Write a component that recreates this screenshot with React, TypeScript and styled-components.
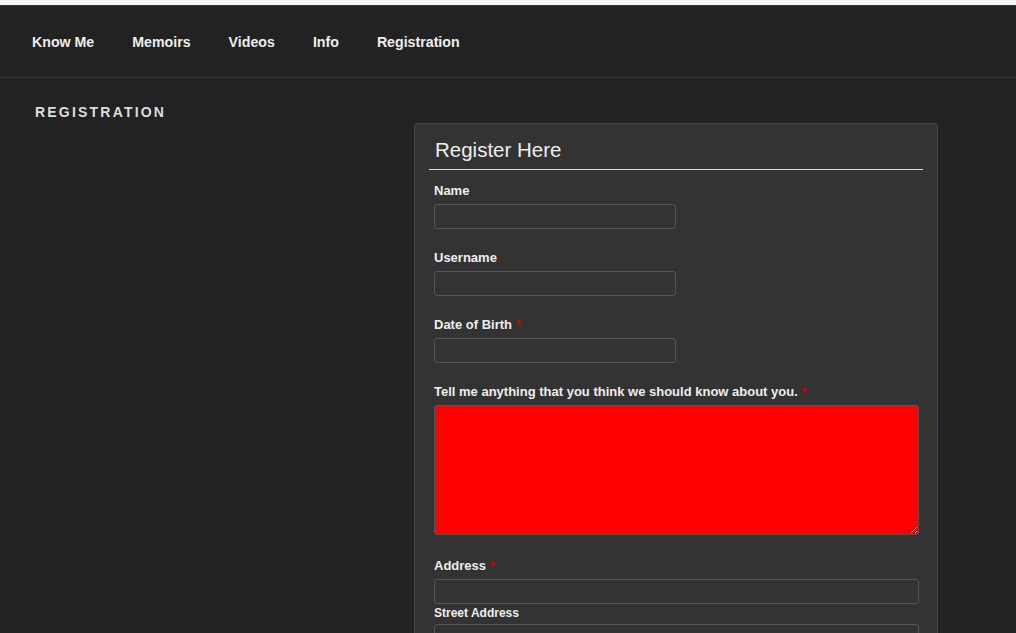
import React from 'react';
import styled, { createGlobalStyle } from 'styled-components';

const GlobalStyle = createGlobalStyle`
  html, body {
    margin: 0;
    padding: 0;
    background: #222222;
    font-family: 'Liberation Sans', Arial, sans-serif;
    overflow: hidden;
  }
`;

const NAV_ITEMS = ['Know Me', 'Memoirs', 'Videos', 'Info', 'Registration'];

type FieldProps = {
  label: string;
  required?: boolean;
  wide?: boolean;
};

const Field: React.FC<FieldProps> = ({ label, required, wide }) => (
  <FieldBox>
    <Label>
      {label}
      {required && <Required> *</Required>}
    </Label>
    <TextInput type="text" $wide={wide} />
  </FieldBox>
);

export const App: React.FC = () => (
  <>
    <GlobalStyle />
    <Page>
      <TopStrip />
      <NavBar>
        {NAV_ITEMS.map((item) => (
          <NavLink key={item}>{item}</NavLink>
        ))}
      </NavBar>
      <Main>
        <PageTitle>Registration</PageTitle>
        <Panel>
          <PanelHeading>Register Here</PanelHeading>
          <Fields>
            <Field label="Name" />
            <Field label="Username" />
            <Field label="Date of Birth" required />
            <FieldBox $gap={22}>
              <Label>
                Tell me anything that you think we should know about you.
                <Required> *</Required>
              </Label>
              <TextArea />
            </FieldBox>
            <FieldBox>
              <Label>
                Address<Required> *</Required>
              </Label>
              <TextInput type="text" $wide />
              <SubLabel>Street Address</SubLabel>
              <TextInput type="text" $wide />
            </FieldBox>
          </Fields>
        </Panel>
      </Main>
    </Page>
  </>
);

const Page = styled.div`
  min-height: 633px;
  background: #222222;
`;

const TopStrip = styled.div`
  height: 5px;
  background: #f6f6f6;
  border-bottom: 1px solid #3a3a3a;
`;

const NavBar = styled.nav`
  display: flex;
  align-items: center;
  gap: 38px;
  height: 71px;
  padding-left: 32px;
  border-bottom: 1px solid #333333;
`;

const NavLink = styled.a`
  color: #eeeeee;
  font-size: 14.2px;
  font-weight: 700;
  cursor: pointer;
`;

const Main = styled.main`
  display: grid;
  grid-template-columns: 379px 524px;
  align-items: start;
  padding: 24px 0 0 35px;
`;

const PageTitle = styled.h2`
  margin: 0;
  color: #dddddd;
  font-size: 14px;
  font-weight: 800;
  line-height: 20px;
  letter-spacing: 2.2px;
  text-transform: uppercase;
`;

const Panel = styled.section`
  margin-top: 21px;
  padding: 0 14px 40px;
  background: #333333;
  border: 1px solid #444444;
  border-radius: 3px;
`;

const PanelHeading = styled.h3`
  margin: 0;
  padding: 14px 6px 7px;
  color: #eeeeee;
  font-size: 20.5px;
  font-weight: 300;
  line-height: 24px;
  border-bottom: 1px solid #dddddd;
`;

const Fields = styled.div`
  padding: 12px 5px 0;
`;

const FieldBox = styled.div<{ $gap?: number }>`
  margin-bottom: ${({ $gap }) => $gap ?? 20}px;
`;

const Label = styled.label`
  display: block;
  margin-bottom: 4px;
  color: #eeeeee;
  font-size: 13px;
  font-weight: 700;
  line-height: 18px;
`;

const SubLabel = styled(Label)`
  margin: 0 0 2px;
  font-size: 12px;
`;

const Required = styled.span`
  color: #cc0000;
`;

const TextInput = styled.input<{ $wide?: boolean }>`
  display: block;
  box-sizing: border-box;
  width: ${({ $wide }) => ($wide ? '485px' : '242px')};
  height: 25px;
  margin: 0;
  padding: 3px 6px;
  background: #333333;
  color: #eeeeee;
  border: 1px solid #555555;
  border-radius: 3px;
  outline: none;
`;

const TextArea = styled.textarea`
  display: block;
  box-sizing: border-box;
  width: 485px;
  height: 130px;
  margin: 0;
  padding: 6px;
  background: #ff0000;
  border: 1px solid #555555;
  border-radius: 3px;
  outline: none;
`;

export default App;
